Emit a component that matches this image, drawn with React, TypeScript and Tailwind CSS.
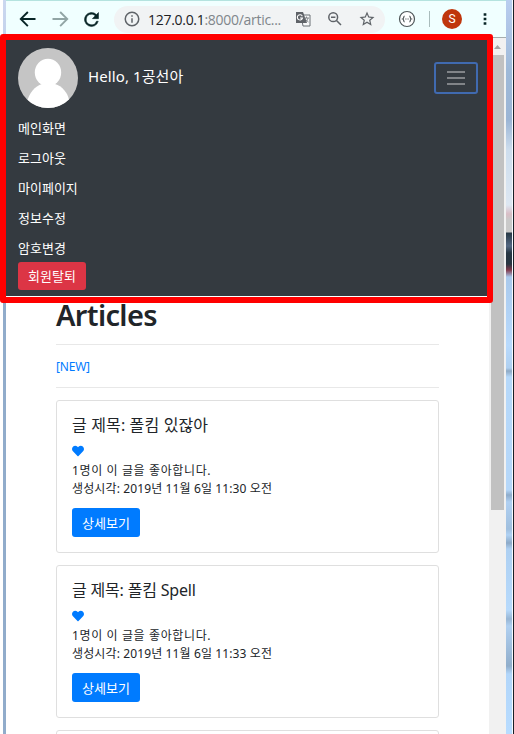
import type { ReactNode } from "react";

const korean = "font-['Noto_Sans','Noto_Sans_CJK_KR',sans-serif]";

function Icon({ children, className = "" }: { children: ReactNode; className?: string }) {
  return (
    <svg viewBox="0 0 24 24" fill="currentColor" className={`shrink-0 ${className}`}>
      {children}
    </svg>
  );
}

function Toolbar() {
  return (
    <header className="mt-px flex h-[37px] shrink-0 items-center border-b border-[#a5adad] bg-[#f0ffff] text-[#082526]">
      <Icon className="ml-[13px] size-[18px]">
        <path d="M22 10.7H5.5l7.2-7.2-1.8-1.8L.6 12l10.3 10.3 1.8-1.8-7.2-7.2H22z" />
      </Icon>
      <Icon className="ml-[14px] size-[18px] text-[#91a5a5]">
        <path d="M2 10.7h16.5l-7.2-7.2 1.8-1.8L23.4 12 13.1 22.3l-1.8-1.8 7.2-7.2H2z" />
      </Icon>
      <Icon className="ml-[12px] size-[21px]">
        <path d="M17.65 6.35A8 8 0 1 0 19.73 14h-2.08A6 6 0 1 1 12 6c1.66 0 3.14.69 4.22 1.78L13 11h7V4z" stroke="currentColor" strokeWidth=".6" />
      </Icon>
      <div className="ml-[12px] flex h-[27px] w-[271px] shrink-0 items-center rounded-full bg-[#f1f3f4] text-[#5f6368]">
        <Icon className="ml-[9px] size-[18px]">
          <path d="M11 7h2v2h-2zm0 4h2v6h-2zm1-9a10 10 0 1 0 0 20 10 10 0 0 0 0-20zm0 18a8 8 0 1 1 0-16 8 8 0 0 1 0 16z" />
        </Icon>
        <span className="ml-[7px] w-[147px] font-['Open_Sans',sans-serif] text-[14px] leading-[27px] tracking-[-0.29px] whitespace-nowrap text-[#80868b]">
          <span className="text-[#202124]">127.0.0.1</span>:8000/artic...
        </span>
        <svg viewBox="0 0 16 16" className="size-[16px] shrink-0">
          <path d="M6 4h9v11H8z" fill="#f8f9fa" stroke="#6b7075" />
          <path d="M1 1h7l4 11H1z" fill="#5f6368" />
          <path d="M7.3 5.2A2.6 2.6 0 1 0 7.5 7H5" fill="none" stroke="#fff" strokeWidth="1.1" />
          <path d="M9 7h5M11.5 5.5V7M10 7c.5 2 2 3 3.5 4M13 7c-.5 2-1 3-2.5 4" fill="none" stroke="#777c80" strokeWidth=".9" />
        </svg>
        <svg viewBox="0 0 16 16" className="ml-[16px] size-[16px] shrink-0" fill="none" stroke="currentColor" strokeWidth="1.5">
          <circle cx="6.2" cy="6.2" r="4.4" />
          <path d="M9.5 9.5 14 14M4 6.2h4.4" />
        </svg>
        <Icon className="ml-[15px] size-[18px]">
          <path d="m22 9.24-7.19-.62L12 2 9.19 8.63 2 9.24l5.46 4.73L5.82 21 12 17.27 18.18 21l-1.63-7.03zM12 15.4l-3.76 2.27 1-4.28-3.32-2.88 4.38-.38L12 6.1l1.71 4.04 4.38.38-3.32 2.88 1 4.28z" />
        </Icon>
      </div>
      <svg viewBox="0 0 18 18" className="ml-[13px] size-[18px] shrink-0" fill="none" stroke="#4f5759" strokeWidth="1.2">
        <circle cx="9" cy="9" r="7.5" fill="#fff" />
        <path d="M6.6 6.2c-1.4 0-.4 2.3-1.8 2.8 1.4.5.4 2.8 1.8 2.8M11.4 6.2c1.4 0 .4 2.3 1.8 2.8-1.4.5-.4 2.8-1.8 2.8" />
        <path d="M7.3 9h3.4" strokeWidth="1" strokeDasharray=".8 .5" />
      </svg>
      <span className="ml-[13px] h-4 w-px bg-[#a9bcbc]" />
      <span className="ml-[12px] flex size-5 shrink-0 items-center justify-center rounded-full bg-[#bf360c] font-[Roboto,sans-serif] text-[12px] text-white">
        S
      </span>
      <Icon className="ml-[14px] size-[18px]">
        <path d="M10.2 4.2h3.6v3.6h-3.6zM10.2 10.2h3.6v3.6h-3.6zM10.2 16.2h3.6v3.6h-3.6z" />
      </Icon>
    </header>
  );
}

function Navbar() {
  const links = ["메인화면", "로그아웃", "마이페이지", "정보수정", "암호변경"];
  return (
    <nav className={`h-[258px] shrink-0 bg-[#343a40] pt-[10px] pr-[11px] pl-[12px] text-white ${korean}`}>
      <div className="flex h-[60px] items-center">
        <svg viewBox="0 0 60 60" className="size-[60px] overflow-hidden rounded-full bg-[#c5c5c5]">
          <g fill="#fff">
            <ellipse cx="30" cy="24.5" rx="13.2" ry="13.8" />
            <path d="M9 54c2-9 8-16 15-18h13c7 2 13 9 14 16v8H9z" />
          </g>
        </svg>
        <span className="-mt-[3px] ml-[10px] text-[15px] tracking-[0.1px] whitespace-nowrap">Hello, 1공선아</span>
        <button className="ml-auto flex h-8 w-11 items-center justify-center rounded-[3px] border-2 border-[#406ab0]">
          <svg viewBox="0 0 18 14" className="h-[14px] w-[18px]" stroke="#9a9da0" strokeWidth="1.4">
            <path d="M0 1h18M0 7h18M0 13h18" />
          </svg>
        </button>
      </div>
      <ul className="pt-[5px] text-[13px]">
        {links.map((label) => (
          <li key={label} className="h-[30px] leading-[30px]">{label}</li>
        ))}
      </ul>
      <button className="-mt-[1px] block h-7 w-[68px] rounded-[3px] bg-[#dc3545] text-[13px] leading-[29px]">
        회원탈퇴
      </button>
    </nav>
  );
}

function Article({ title, time }: { title: ReactNode; time: string }) {
  return (
    <article className="mb-3 h-[153px] rounded-[3px] border border-[#dfdfdf] px-[15px] pt-[13px]">
      <h2 className="h-[22px] text-[16px] leading-[22px] whitespace-nowrap">{title}</h2>
      <svg viewBox="0 0 512 512" className="mt-[9px] size-[12px]" fill="#007bff">
        <path d="M462 62c-55-47-136-38-186 14l-20 20-20-20C186 24 105 15 50 62c-63 54-66 150-10 208l193 200c13 13 33 13 46 0l193-200c56-58 53-154-10-208z" />
      </svg>
      <div className="mt-[5px] text-[12px] leading-[18px] whitespace-nowrap">
        <p className="tracking-[0.62px]">1명이 이 글을 좋아합니다.</p>
        <p className="tracking-[0.12px]">생성시각: 2019년 11월 6일 {time} 오전</p>
      </div>
      <button className="mt-[10px] block h-[29px] w-[68px] rounded-[3px] bg-[#007bff] text-[13px] leading-[31px] text-white">
        상세보기
      </button>
    </article>
  );
}

export default function App() {
  return (
    <div className="relative flex h-[734px] w-[514px] overflow-hidden bg-white">
      <div className="ml-[3px] w-[3px] shrink-0 bg-linear-to-b from-[#cbd8f0] to-[#91accb] to-40%" />
      <div className="flex w-[500px] shrink-0 flex-col bg-[#b4e3df]">
        <Toolbar />
        <div className="flex min-h-0 flex-1">
          <div className="flex w-[483px] shrink-0 flex-col overflow-hidden bg-white">
            <Navbar />
            <main className={`px-[50px] text-[#212529] ${korean}`}>
              <h1 className="h-[48px] text-[29px] leading-[38px] font-semibold tracking-[-0.65px]">Articles</h1>
              <div className="h-[44px] border-y border-[#e8e8e8] text-[12px] leading-[43px] tracking-[-0.2px] text-[#007bff]">[NEW]</div>
              <div className="mt-[12px]">
                <Article title={<span className="tracking-[0.14px]">글 제목: 폴킴 있잖아</span>} time="11:30" />
                <Article title={<span className="tracking-[-0.18px]">글 제목: 폴킴 Spell</span>} time="11:33" />
                <article className="h-[153px] rounded-[3px] border border-[#dfdfdf]" />
              </div>
            </main>
          </div>
          <div className="flex w-[17px] flex-col items-center bg-[#f1f1f1]">
            <svg viewBox="0 0 7 4" className="mt-[7px] h-[4px] w-[7px]" fill="#a3a3a3">
              <path d="M0 4 3.5 0 7 4z" />
            </svg>
            <div className="mt-[6px] h-[455px] w-[13px] bg-[#c1c1c1]" />
          </div>
        </div>
      </div>
      <div className="w-[6px] shrink-0 bg-linear-[180deg,#b9cef0_0px,#9eb9d8_70px,#9bb5d5_120px,#cddded_150px,#dde7f2_205px,#d9bdc5_214px,#c9c9c9_220px,#c9c9c9_232px,#283947_233px,#536782_246px,#273744_253px,#283541_264px,#80394b_270px,#a9c9ec_277px,#b8dafd_345px,#afd0f1_368px,#8faac5_371px,#b5d8fa_377px,#b5d7f9_490px,#8eaccb_495px,#b0d0f2_502px,#a0bfde_529px,#b0d2f4_535px,#8daac8_543px,#aed0f2_549px,#b7dafc_610px,#98b6d4_619px,#b0d0f1_626px,#91aecb_666px,#b2d6fa_674px,#b8dcff_734px]" />
      <div className="w-px shrink-0 bg-[#f8fbff]" />
      <div className="w-px shrink-0 bg-[#182027]" />
      <div className="absolute top-[34px] left-0 h-[269px] w-[493px] rounded-[3px] border-6 border-[#ff0000]" />
    </div>
  );
}
